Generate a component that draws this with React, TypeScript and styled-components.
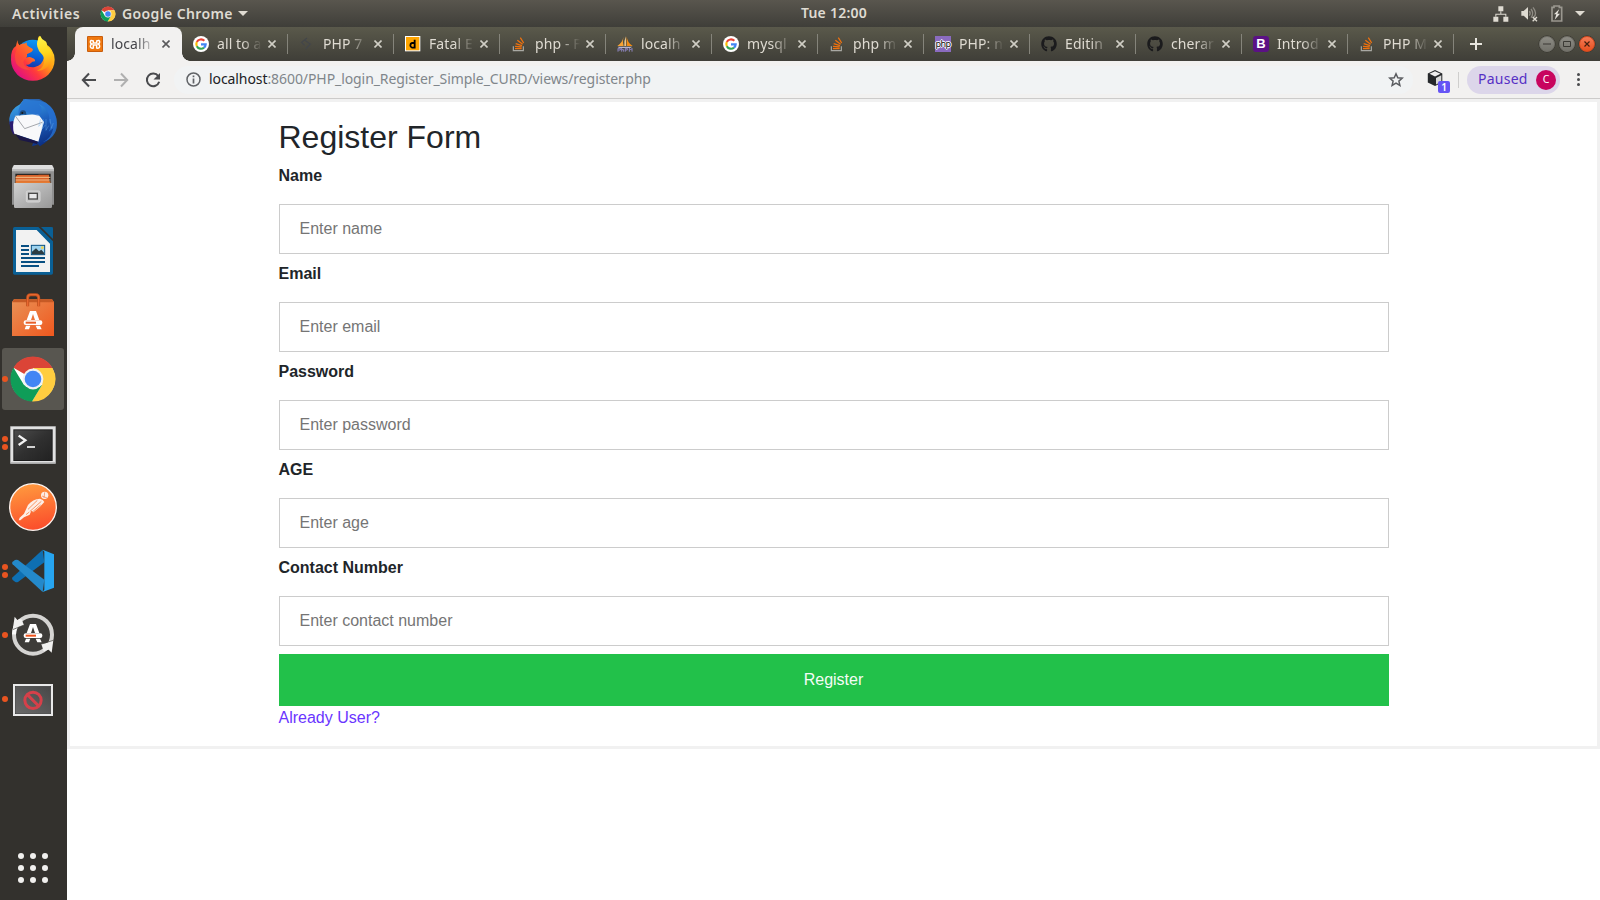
import React from "react";
import styled, { createGlobalStyle } from "styled-components";
import { FaGithub } from "react-icons/fa";

const ui = '"Noto Sans", "Open Sans", "DejaVu Sans", sans-serif';

const GlobalStyle = createGlobalStyle`
  *, *::before, *::after { box-sizing: border-box; }
  body { margin: 0; overflow: hidden; background: #fff; }
`;

const Desktop = styled.div`
  display: flex;
  flex-direction: column;
  width: 1600px;
  height: 900px;
  font-family: ${ui};
`;

/* ---------- top panel ---------- */

const TopBar = styled.header`
  display: grid;
  grid-template-columns: 1fr auto 1fr;
  align-items: center;
  height: 27px;
  flex: none;
  padding: 0 15px 0 12px;
  background: linear-gradient(#59564e, #3f3e39);
  color: #dfdbd2;
  font-size: 14px;
  font-weight: 600;
  line-height: 26px;
  white-space: nowrap;
`;

const PanelLeft = styled.div`
  display: flex;
  align-items: center;
`;

const PanelRight = styled.div`
  display: flex;
  align-items: center;
  justify-content: flex-end;
`;

const PanelText = styled.span<{ $w: number; $ls?: number }>`
  width: ${(p) => p.$w}px;
  letter-spacing: ${(p) => p.$ls ?? 0}px;
`;

const AppMenu = styled.div`
  display: flex;
  align-items: center;
  margin-left: 20px;
  gap: 6px;
`;

const Caret = styled.i`
  width: 0;
  height: 0;
  border: 5px solid transparent;
  border-top-color: #dfdbd2;
  border-bottom-width: 0;
`;

const Clock = styled.div`
  margin-left: 71px;
  padding-bottom: 2px;
  line-height: 24px;
  letter-spacing: 0.25px;
`;

/* ---------- dock ---------- */

const Workspace = styled.div`
  display: flex;
  flex: 1;
  min-height: 0;
`;

const Dock = styled.nav`
  display: flex;
  flex-direction: column;
  gap: 2px;
  width: 67px;
  flex: none;
  padding: 1px 0 0 2px;
  background: #33312d;
`;

const DockSlot = styled.div<{ $active?: boolean }>`
  position: relative;
  display: flex;
  align-items: center;
  justify-content: center;
  width: 62px;
  height: 62px;
  flex: none;
  border-radius: 3px;
  background: ${(p) => (p.$active ? "#585650" : "transparent")};
`;

const RunningDots = styled.div`
  position: absolute;
  left: 0;
  top: 0;
  bottom: 0;
  display: flex;
  flex-direction: column;
  justify-content: center;
  gap: 2px;
`;

const RunningDot = styled.i`
  width: 6px;
  height: 6px;
  border-radius: 50%;
  background: #e95420;
`;

const AppsButton = styled.div`
  display: grid;
  grid-template-columns: repeat(3, 6px);
  gap: 6px;
  margin: auto 0 17px 16px;
`;

const AppsDot = styled.i`
  height: 6px;
  border-radius: 50%;
  background: #f1f0ee;
`;

/* ---------- browser ---------- */

const Browser = styled.main`
  display: flex;
  flex-direction: column;
  flex: 1;
  min-width: 0;
  background: #fff;
`;

const TabStrip = styled.div`
  display: flex;
  height: 34px;
  flex: none;
  padding-left: 8px;
  background: linear-gradient(#5a594b, #3f3e38);
`;

const TabBox = styled.div<{ $active?: boolean }>`
  position: relative;
  display: flex;
  align-items: center;
  width: ${(p) => (p.$active ? 107 : 106)}px;
  margin-right: ${(p) => (p.$active ? -1 : 0)}px;
  flex: none;
  padding-left: 12px;
  border-radius: 8px 8px 0 0;
  background: ${(p) => (p.$active ? "#f2f1f0" : "transparent")};
  color: ${(p) => (p.$active ? "#45454a" : "#dfdbd2")};

  ${(p) =>
    p.$active
      ? `
  &::before, &::after {
    content: "";
    position: absolute;
    bottom: 0;
    width: 8px;
    height: 8px;
  }
  &::before { left: -8px; background: radial-gradient(circle at 0 0, transparent 7.5px, #f2f1f0 8px); }
  &::after { right: -8px; background: radial-gradient(circle at 100% 0, transparent 7.5px, #f2f1f0 8px); }
  `
      : ""}
`;

const TabTitle = styled.span`
  width: 46px;
  margin-left: 8px;
  white-space: nowrap;
  font-size: 14px;
  line-height: 20px;
  letter-spacing: 0.1px;
  mask-image: linear-gradient(to right, #000 25px, transparent 45px);
`;

const TabClose = styled.svg`
  width: 8px;
  height: 8px;
  margin-left: 5px;
`;

const TabDivider = styled.i`
  width: 1px;
  height: 20px;
  margin: 0 -1px 0 auto;
  background: #85847b;
`;

const NewTab = styled.svg`
  width: 12px;
  height: 12px;
  margin: 11px 0 0 17px;
`;

const WindowButtons = styled.div`
  display: flex;
  align-items: center;
  gap: 4px;
  margin: 0 5px 0 auto;
`;

const WindowButton = styled.span<{ $close?: boolean }>`
  display: flex;
  align-items: center;
  justify-content: center;
  width: 16px;
  height: 16px;
  border-radius: 50%;
  border: 1px solid ${(p) => (p.$close ? "#d34a1f" : "#6f6e67")};
  background: ${(p) => (p.$close ? "linear-gradient(#f57b56, #e6501f)" : "linear-gradient(#8c8b84, #73726b)")};
  box-shadow: 0 0 0 0.5px #34332e;
`;

const Toolbar = styled.div`
  display: flex;
  align-items: center;
  height: 38px;
  flex: none;
  padding: 0 20px 1px 14px;
  background: #f2f1f0;
  box-shadow: inset 0 -1px #cccbca;
`;

const NavIcon = styled.svg<{ $gap?: number }>`
  width: 16px;
  height: 16px;
  flex: none;
  margin-right: ${(p) => p.$gap ?? 16}px;
`;

const Omnibox = styled.div`
  display: flex;
  align-items: center;
  flex: 1;
  height: 28px;
  padding: 0 9px 0 12px;
  border-radius: 14px;
  background: #f1f3f4;
`;

const Url = styled.span`
  flex: 1;
  margin: 0 0 2px 8px;
  font-size: 14px;
  line-height: 20px;
  letter-spacing: -0.08px;
  color: #80868b;
  white-space: nowrap;

  b { font-weight: 400; color: #202124; }
`;

const Extension = styled.div`
  position: relative;
  width: 22px;
  height: 22px;
  margin-left: 14px;
`;

const ExtensionBadge = styled.span`
  position: absolute;
  left: 11px;
  top: 12px;
  width: 12px;
  height: 12px;
  border-radius: 2px;
  background: #6554f5;
  color: #fff;
  font: 600 10px/12px ${ui};
  text-align: center;
`;

const ToolbarDivider = styled.i`
  width: 1px;
  height: 16px;
  margin: 0 8px 0 9px;
  background: #cfcecd;
`;

const ProfileChip = styled.div`
  display: flex;
  align-items: center;
  justify-content: space-between;
  width: 93px;
  height: 28px;
  padding: 0 4px 0 11px;
  border-radius: 14px;
  background: #dcd6ea;
  color: #5630c5;
  font-size: 14px;
  letter-spacing: 0.25px;
`;

const ChipText = styled.span`
  margin-bottom: 2px;
  line-height: 20px;
`;

const Avatar = styled.span`
  width: 20px;
  height: 20px;
  border-radius: 50%;
  background: #c8055f;
  color: #fff;
  font-size: 10.5px;
  letter-spacing: 0;
  line-height: 19px;
  text-align: center;
`;

const MenuDots = styled.div`
  display: flex;
  flex-direction: column;
  gap: 2px;
  margin-left: 17px;
`;

const MenuDot = styled.i`
  width: 3px;
  height: 3px;
  border-radius: 50%;
  background: #4a4b4d;
`;

/* ---------- page ---------- */

const Form = styled.form`
  border: 3px solid #f1f1f1;
  font: 400 16px/24px "Liberation Sans", Arial, sans-serif;
  color: #212529;
`;

const Container = styled.div`
  width: 1140px;
  margin: 0 auto;
  padding: 16px 15px;
`;

const Heading = styled.h2`
  margin: 0 0 8px;
  font-size: 32px;
  font-weight: 500;
  line-height: 1.2;
`;

const Label = styled.label`
  display: block;
  font-weight: 700;
`;

const Input = styled.input`
  display: block;
  width: 100%;
  height: 50px;
  margin: 16px 0 8px;
  padding: 12px 20px;
  border: 1px solid #ccc;
  background: #fff;
  font: inherit;
  outline: none;

  &::placeholder { color: #757575; opacity: 1; }
`;

const Field = styled.div`
  display: flow-root;
`;

const Submit = styled.button`
  display: block;
  width: 100%;
  padding: 14px 20px;
  border: 0;
  background: #22c14a;
  color: #f4fcf6;
  font: inherit;
`;

const LoginLink = styled.a`
  display: block;
  color: #6a35ff;
`;

/* ---------- drawings ---------- */

const ChromeLogo = ({ size }: { size: number }) => (
  <svg width={size} height={size} viewBox="0 0 48 48">
    <circle cx="24" cy="24" r="22" fill="#fff" />
    <path d="M24 24 4.5 12.8A22.5 22.5 0 0 1 43.500 13H24z" fill="#db4437" />
    <path d="M43.500 13A22.5 22.5 0 0 1 23 46.500L33.500 29 24 13z" fill="#ffcd40" />
    <path d="M4.500 12.800 15 30 24 34 33 30 23 46.500A22.500 22.500 0 0 1 4.500 12.800z" fill="#0f9d58" />
    <circle cx="24" cy="24" r="10.4" fill="#f1f1f1" />
    <circle cx="24" cy="24" r="8.3" fill="#4285f4" />
  </svg>
);

const Firefox = () => (
  <svg width="48" height="48" viewBox="27 30 144 144">
    <defs>
      <linearGradient id="ffBody" x1="0.9" y1="0.1" x2="0.15" y2="0.85">
        <stop offset="0" stopColor="#ffe226" />
        <stop offset="0.4" stopColor="#ff9a14" />
        <stop offset="0.7" stopColor="#ff3a3c" />
        <stop offset="1" stopColor="#e3127e" />
      </linearGradient>
      <linearGradient id="ffTail" x1="0.4" y1="0" x2="0.5" y2="1">
        <stop offset="0" stopColor="#fff44a" />
        <stop offset="0.5" stopColor="#ffd71c" />
        <stop offset="1" stopColor="#ff8b12" />
      </linearGradient>
      <linearGradient id="ffGlobe" x1="0.6" y1="0" x2="0.4" y2="1">
        <stop offset="0" stopColor="#0a9af5" />
        <stop offset="0.55" stopColor="#0a59d2" />
        <stop offset="1" stopColor="#2b1a80" />
      </linearGradient>
    </defs>
    <circle cx="98" cy="96" r="52" fill="url(#ffGlobe)" />
    <path d="M52 46q0 9 6 15 7-6 17-5l4-4q0 8 5 12l14 8q1 8-9 11l-8 4q2 8-3 11 12-5 19 1 9 2 8 10-9 0-13 6-6 6-15 4 10 10 28 7 22-5 26-26 4-22-14-44-8-20 3-24 1 12 14 22 30 20 30 50a65 63 0 0 1-131 0q-1-32 15-41z" fill="url(#ffBody)" />
    <path d="M121 33q-13 13-9 32 3 14 15 24 9 12 4 28-5 15-20 20 24 2 38-20 14-26 0-46-3-5-8-7 1-14-7-17-10-5-13-14z" fill="url(#ffTail)" />
    <path d="M52 46q0 9 6 15 7-6 17-5l4-4q0 8 5 12l14 8q1 8-9 11l-8 4q2 8-3 11-8 8-8 14 4 17 23 22-30 2-44-18Q40 90 50 75q0-17 2-29z" fill="#ff5b2d" opacity=".55" />
  </svg>
);

const Thunderbird = () => (
  <svg width="48" height="48" viewBox="27 222 144 144">
    <defs>
      <linearGradient id="tbBird" x1="0.3" y1="0" x2="0.7" y2="1">
        <stop offset="0" stopColor="#3da5e6" />
        <stop offset="0.5" stopColor="#1e62c0" />
        <stop offset="1" stopColor="#0b2d80" />
      </linearGradient>
    </defs>
    <path d="M76 222l16 4q48-4 68 30 16 36 2 66-12 24-42 42l-6-6q-10 4-18 6l4-12-50-24q-24-18-22-48 4-28 32-42 4-10 16-16z" fill="url(#tbBird)" />
    <path d="M28 290q2 26 14 40l10-22-12-20z" fill="#2a1b70" />
    <path d="M46 272l68-5 18 24-17 59-72-24q-9-25 3-54z" fill="#f8f8fa" />
    <path d="M46 273l28 38 53-19" fill="none" stroke="#a5a7ac" strokeWidth="3" />
    <path d="M46 328l68 22-3 7-52-12z" fill="#1b1747" />
    <path d="M69 226q-17 25-13 46 4-18 34-8 18 8 28 8 14-22-2-34 34 10 32 54l6 8-8 20 14-10q-6 30-32 42 50-18 42-70-8-40-48-58-24-10-53-8z" fill="#2770cf" opacity=".8" />
    <path d="M58 272q1-16 11-16t10 13q-12-4-21 3z" fill="#1d4a7c" />
    <circle cx="67" cy="264" r="3" fill="#171717" />
    <path d="M122 282l-6 22 8-8m6-14-4 30 10-12m2-18 0 34 8-14m4-20 4 28 6-16" fill="none" stroke="#6fb1ef" strokeWidth="2" opacity=".55" />
  </svg>
);

const Files = () => (
  <svg width="48" height="48" viewBox="27 414 144 144">
    <defs>
      <linearGradient id="drawer" x1="0" y1="0" x2="1" y2="1">
        <stop offset="0" stopColor="#d0d0d0" />
        <stop offset="1" stopColor="#989898" />
      </linearGradient>
    </defs>
    <path d="M42 420h114q5 4 6 12v107H36V432q1-8 6-12z" fill="#8f8f8f" />
    <path d="M42 420h114l6 12H36z" fill="#dedede" />
    <path d="M36 432h126v7H36z" fill="#bcbcbc" />
    <path d="M46 446h106v28H46z" fill="#2b2724" />
    <path d="M52 450h60l6-1h29v24H47v-18z" fill="#d9622a" />
    <path d="M47 457h104M47 465h104" stroke="#f3c189" strokeWidth="3" />
    <path d="M47 469h104v5H47z" fill="#e57c34" />
    <path d="M42 474h114v71q0 4-4 4H46q-4 0-4-4z" fill="url(#drawer)" />
    <rect x="79" y="498" width="41" height="33" rx="4" fill="#c6c6c6" stroke="#d6d6d6" strokeWidth="3" />
    <rect x="86" y="505" width="26" height="17" fill="#e9e9ea" stroke="#4b4b4b" strokeWidth="4" />
  </svg>
);

const Writer = () => (
  <svg width="48" height="48" viewBox="27 606 144 144">
    <path d="M44 606h71l44 43v95q0 5-5 5H44q-5 0-5-5V611q0-5 5-5z" fill="#0a6096" />
    <path d="M123 606h32q4 0 4 4v32z" fill="#0a6096" />
    <path d="M48 615h62l40 41v85H48z" fill="#f2f2f2" />
    <path d="M110 609l45 46" stroke="#0a6096" strokeWidth="5" />
    <path d="M63 663h24M63 675h24M63 687h24M63 699h72M63 711h72M63 723h54" stroke="#084f82" strokeWidth="6" />
    <rect x="94" y="661" width="40" height="28" fill="#9ed3ef" stroke="#084f82" strokeWidth="3" />
    <circle cx="127" cy="668" r="4" fill="#f6d348" />
    <path d="M96 688v-8l12-10 9 9 7-5 8 9v5z" fill="#2c3c43" />
  </svg>
);

const SoftwareA = ({ y, accent }: { y: number; accent: string }) => (
  <g transform={`translate(0 ${y})`}>
    <path d="M90 0h18l10 27H105l-6-18-6 18H80z" fill="#fff" />
    <rect x="71" y="28" width="56" height="14" rx="6" fill="#fff" />
    <path d="M77 32h31v6H77z" fill={accent} />
    <path d="M74 55l4-11h13l-4 11zM107 44h13l5 11h-13z" fill="#fff" />
  </g>
);

const Software = () => (
  <svg width="48" height="48" viewBox="27 33 144 144">
    <defs>
      <linearGradient id="bag" x1="0" y1="0" x2="1" y2="1">
        <stop offset="0" stopColor="#e89156" />
        <stop offset="1" stopColor="#f0581e" />
      </linearGradient>
    </defs>
    <path d="M42 58h114l6 8v102H36V66z" fill="url(#bag)" />
    <path d="M42 58h114l6 9H36z" fill="#c65a25" />
    <path d="M83 79V53q0-9 9-9h15q9 0 9 9v26" fill="none" stroke="#c2501e" strokeWidth="9" />
    <path d="M83 79V53q0-9 9-9h15q9 0 9 9v26" fill="none" stroke="#e8682f" strokeWidth="4" />
    <SoftwareA y={93} accent="#e8602a" />
  </svg>
);

const TerminalIcon = () => (
  <svg width="48" height="48" viewBox="27 417 144 144">
    <defs>
      <linearGradient id="screen" x1="0" y1="0" x2="1" y2="1">
        <stop offset="0" stopColor="#4b4b4b" />
        <stop offset="0.5" stopColor="#303030" />
        <stop offset="1" stopColor="#222" />
      </linearGradient>
    </defs>
    <rect x="30" y="438" width="138" height="114" rx="3" fill="#a9a9a9" />
    <rect x="33" y="441" width="132" height="106" fill="#e2e2e2" />
    <rect x="40" y="448" width="118" height="95" fill="#1c1c1c" />
    <rect x="43" y="451" width="112" height="89" fill="url(#screen)" />
    <path d="M56 467l20 14-20 14" fill="none" stroke="#f3f3f3" strokeWidth="7" />
    <path d="M81 501h24" stroke="#f3f3f3" strokeWidth="5" />
  </svg>
);

const Postman = () => (
  <svg width="48" height="48" viewBox="27 609 144 144">
    <defs>
      <linearGradient id="pm" x1="0.3" y1="0" x2="0.5" y2="1">
        <stop offset="0" stopColor="#ff9a3e" />
        <stop offset="1" stopColor="#fb4d2b" />
      </linearGradient>
    </defs>
    <circle cx="99" cy="681" r="70" fill="url(#pm)" stroke="#fdf3ee" strokeWidth="4" />
    <circle cx="134" cy="646" r="11" fill="#fdeee6" />
    <path d="M126 648l15 6M134 637l-2 17" stroke="#f37a43" strokeWidth="2" />
    <path d="M120 656q10 2 13 10l-13 14-20 17-6-5-5 12-17 8-11 9h-5l3-8 13-12 12-26q14-18 36-19z" fill="#fdeee6" />
    <path d="M84 688l28-27M90 694l34-30M96 697l26-22M78 704l10-8" stroke="#f5854c" strokeWidth="2.500" />
  </svg>
);

const VsCode = () => (
  <svg width="48" height="48" viewBox="27 36 144 144">
    <path d="M128 44l5 38-79 59q-4 2-8 0l-8-6q-4-4 0-8z" fill="#0e6fb2" />
    <path d="M38 88q-4-5 0-8l7-5q5-2 9 0l79 59-5 37z" fill="#2489ca" />
    <path d="M128 44l34 14v100l-34 13 5-7V50z" fill="#27a5f0" />
  </svg>
);

const Updater = () => (
  <svg width="48" height="48" viewBox="27 228 144 144">
    <circle cx="99" cy="299" r="57" fill="#3d3c39" stroke="#d5d4d2" strokeWidth="12" />
    <path d="M42 298a57 57 0 0 1 20-42" stroke="#fafafa" strokeWidth="12" fill="none" />
    <path d="M38 284l6-39 8 10 12-3 8 18-14 5z" fill="#f0f0ef" />
    <path d="M160 316l-5 37-9-9-15 5-7-22 15-3z" fill="#f0f0ef" />
    <path d="M38 284l34-14M125 327l35-11" stroke="#403f3b" strokeWidth="2" />
    <SoftwareA y={267} accent="#ee531c" />
  </svg>
);

const ScreenLock = () => (
  <svg width="48" height="48" viewBox="27 420 144 144">
    <defs>
      <linearGradient id="dim" x1="1" y1="0" x2="0" y2="1">
        <stop offset="0" stopColor="#474747" />
        <stop offset="1" stopColor="#6a6a6a" />
      </linearGradient>
    </defs>
    <rect x="39" y="447" width="120" height="96" fill="#e9e9e9" />
    <rect x="46" y="454" width="106" height="82" fill="url(#dim)" stroke="#3a3a3a" strokeWidth="2" />
    <circle cx="99" cy="496" r="24.500" fill="none" stroke="#d5404a" strokeWidth="9" />
    <path d="M82 479l34 34" stroke="#d5404a" strokeWidth="9" />
  </svg>
);

const Fav = styled.svg.attrs({ viewBox: "0 0 48 48", width: 16, height: 16 })`
  flex: none;
`;

const Xampp = () => (
  <Fav>
    <rect width="48" height="48" rx="3" fill="#c95d0c" />
    <rect x="3" y="3" width="42" height="42" fill="#f0780f" />
    <path d="M19 21v-6q-9-4-9 3 0 4 4 6-4 2-4 7 0 7 9 5v-9h10v9q9 2 9-5 0-5-4-7 4-2 4-6 0-7-9-3v6z" fill="none" stroke="#fff" strokeWidth="4.500" />
  </Fav>
);

const Google = () => (
  <Fav>
    <circle cx="24" cy="24" r="24" fill="#fff" />
    <g fill="none" strokeWidth="6.500">
      <path d="M34 14.500A14 14 0 0 0 11.500 18" stroke="#ea4335" />
      <path d="M11.500 18A14 14 0 0 0 11.500 30.500" stroke="#fbbc05" />
      <path d="M11.500 30.500A14 14 0 0 0 33 35" stroke="#34a853" />
      <path d="M33 35A14 14 0 0 0 38 25H24" stroke="#4285f4" />
    </g>
  </Fav>
);

const DarkArrows = () => (
  <Fav>
    <path d="M24 6 8 19l9 9M16 12l18 12-14 15" fill="none" stroke="#43464a" strokeWidth="3.500" />
  </Fav>
);

const Digital = () => (
  <Fav>
    <rect x="1.500" y="1.500" width="43" height="43" fill="#ffa500" stroke="#fff" strokeWidth="3" />
    <path d="M29 11v24h-8q-5-1-5-7t5-7h8" fill="none" stroke="#000" strokeWidth="5.500" />
  </Fav>
);

const StackOverflow = () => (
  <Fav>
    <path d="M7 31v13h30V31" fill="none" stroke="#a9a9a4" strokeWidth="3.500" />
    <path d="M12 38h20M12 31l20 2M14 23l19 6M19 13l16 12M28 5l10 16" stroke="#f0720e" strokeWidth="3.800" />
  </Fav>
);

const PhpMyAdmin = () => (
  <Fav>
    <path d="M19 3q-2 16-18 27h19q-4-12-1-27z" fill="#f7a233" />
    <path d="M27 1q-7 14-5 29h5z" fill="#e9c58a" />
    <path d="M29 1q2 20 18 29H29z" fill="#f28c13" />
    <path d="M2 32h44l-6 4H6z" fill="#b8b5cc" />
    <path d="M3 47V37h7v5H4m10-6v11m0-6h6v6m5 0V37h6v5h-5m11 5V37l4 5 4-5v10" fill="none" stroke="#8b83bd" strokeWidth="3" />
  </Fav>
);

const PhpMark = styled.span`
  display: flex;
  align-items: center;
  justify-content: center;
  width: 16px;
  height: 16px;
  flex: none;
  background: #8a6bbf;
  color: #111;
  font: 400 9px/14px ${ui};
  letter-spacing: -0.5px;
  text-shadow: 0 0 1px #fff, 1px 0 0 #fff, -1px 0 0 #fff, 0 1px 0 #fff, 0 -1px 0 #fff;
`;

const BootstrapMark = styled.span`
  width: 16px;
  height: 16px;
  flex: none;
  border-radius: 3px;
  background: #5b1185;
  color: #fff;
  font: 700 13px/16px "Liberation Sans", Arial, sans-serif;
  text-align: center;
`;

const GithubMark = styled(FaGithub)`
  width: 16px;
  height: 16px;
  flex: none;
  color: #1b1b1d;
`;

const tabs: { title: string; icon: React.ReactNode }[] = [
  { title: "localh", icon: <Xampp /> },
  { title: "all to a", icon: <Google /> },
  { title: "PHP 7", icon: <DarkArrows /> },
  { title: "Fatal E", icon: <Digital /> },
  { title: "php - F", icon: <StackOverflow /> },
  { title: "localh", icon: <PhpMyAdmin /> },
  { title: "mysql", icon: <Google /> },
  { title: "php m", icon: <StackOverflow /> },
  { title: "PHP: n", icon: <PhpMark>php</PhpMark> },
  { title: "Editin", icon: <GithubMark /> },
  { title: "cherar", icon: <GithubMark /> },
  { title: "Introd", icon: <BootstrapMark>B</BootstrapMark> },
  { title: "PHP M", icon: <StackOverflow /> },
];

const dockApps: { icon: React.ReactNode; running: number }[] = [
  { icon: <Firefox />, running: 0 },
  { icon: <Thunderbird />, running: 0 },
  { icon: <Files />, running: 0 },
  { icon: <Writer />, running: 0 },
  { icon: <Software />, running: 0 },
  { icon: <ChromeLogo size={48} />, running: 1 },
  { icon: <TerminalIcon />, running: 2 },
  { icon: <Postman />, running: 0 },
  { icon: <VsCode />, running: 2 },
  { icon: <Updater />, running: 1 },
  { icon: <ScreenLock />, running: 1 },
];

const fields = [
  { label: "Name", placeholder: "Enter name" },
  { label: "Email", placeholder: "Enter email" },
  { label: "Password", placeholder: "Enter password" },
  { label: "AGE", placeholder: "Enter age" },
  { label: "Contact Number", placeholder: "Enter contact number" },
];

const StatusIcons = () => (
  <svg width="72" height="18" viewBox="0 0 216 54">
    <g fill="#dfdbd2">
      <path d="M16 4h15v15H16zM1 35h15v15H1zM31 35h15v15H31z" />
      <path d="M22 19h3v7h15v9h-3v-6H10v6H7v-9h15z" />
      <path d="M85 18h7l13-12v38L92 32h-7z" />
    </g>
    <path d="M109 18q5 7 0 14M114 12q10 13 0 26M120 7q14 18 2 30" fill="none" stroke="#8f8c84" strokeWidth="4" />
    <path d="M119 36l13 13m0-13-13 13" stroke="#dfdbd2" strokeWidth="4" />
    <path d="M177 7h6V3h16v4h7v41h-29z" fill="none" stroke="#9a978f" strokeWidth="5" />
    <path d="M199 12l-16 16h7l-5 16 16-18h-8z" fill="#e6e3dc" />
  </svg>
);

export default function App() {
  return (
    <Desktop>
      <GlobalStyle />
      <TopBar>
        <PanelLeft>
          <PanelText $w={68} $ls={0.57}>Activities</PanelText>
          <AppMenu>
            <ChromeLogo size={16} />
            <PanelText $w={110} $ls={0.38}>Google Chrome</PanelText>
            <Caret />
          </AppMenu>
        </PanelLeft>
        <Clock>Tue 12:00</Clock>
        <PanelRight>
          <StatusIcons />
          <Caret style={{ marginLeft: 10 }} />
        </PanelRight>
      </TopBar>
      <Workspace>
        <Dock>
          {dockApps.map((app, i) => (
            <DockSlot key={i} $active={i === 5}>
              {app.icon}
              {app.running > 0 && (
                <RunningDots>
                  {Array.from({ length: app.running }, (_, n) => (
                    <RunningDot key={n} />
                  ))}
                </RunningDots>
              )}
            </DockSlot>
          ))}
          <AppsButton>
            {Array.from({ length: 9 }, (_, n) => (
              <AppsDot key={n} />
            ))}
          </AppsButton>
        </Dock>
        <Browser>
          <TabStrip>
            {tabs.map((tab, i) => (
              <TabBox key={i} $active={i === 0}>
                {tab.icon}
                <TabTitle>{tab.title}</TabTitle>
                <TabClose viewBox="0 0 8 8">
                  <path d="M.5.5l7 7m0-7-7 7" stroke={i === 0 ? "#5a5a5c" : "#d0cec5"} strokeWidth="1.6" />
                </TabClose>
                {i > 0 && <TabDivider />}
              </TabBox>
            ))}
            <NewTab viewBox="0 0 12 12">
              <path d="M6 0v12M0 6h12" stroke="#e8e6df" strokeWidth="2" />
            </NewTab>
            <WindowButtons>
              <WindowButton>
                <svg width="8" height="8" viewBox="0 0 8 8"><path d="M0 4h8" stroke="#3a3934" /></svg>
              </WindowButton>
              <WindowButton>
                <svg width="8" height="8" viewBox="0 0 8 8"><path d="M.5 1.500h7v5h-7z" fill="none" stroke="#3a3934" /></svg>
              </WindowButton>
              <WindowButton $close>
                <svg width="6" height="6" viewBox="0 0 6 6"><path d="M.5.5l5 5m0-5-5 5" stroke="#45200f" strokeWidth="1.2" /></svg>
              </WindowButton>
            </WindowButtons>
          </TabStrip>
          <Toolbar>
            <NavIcon viewBox="0 0 16 16">
              <path d="M15 8H2M8 1.500 1.800 8 8 14.500" fill="none" stroke="#4a4b4e" strokeWidth="2" />
            </NavIcon>
            <NavIcon viewBox="0 0 16 16">
              <path d="M1 8h13M8 1.500 14.200 8 8 14.500" fill="none" stroke="#b0b0b0" strokeWidth="2" />
            </NavIcon>
            <NavIcon viewBox="0 0 16 16" $gap={13}>
              <path d="M13.300 4.200A6.300 6.300 0 1 0 14.200 9.800" fill="none" stroke="#4a4b4e" strokeWidth="2" />
              <path d="M15 1v6.500H8.500z" fill="#4a4b4e" />
            </NavIcon>
            <Omnibox>
              <svg width="15" height="15" viewBox="0 0 15 15">
                <circle cx="7.500" cy="7.500" r="6.500" fill="none" stroke="#606367" strokeWidth="1.500" />
                <path d="M7.500 6.500v5M7.500 3.500v1.700" stroke="#606367" strokeWidth="1.700" />
              </svg>
              <Url><b>localhost</b>:8600/PHP_login_Register_Simple_CURD/views/register.php</Url>
              <svg width="16" height="16" viewBox="0 0 16 16">
                <path d="M8 1.800l1.800 4 4.400.4-3.300 2.900 1 4.300L8 11.100l-3.900 2.300 1-4.300-3.300-2.900 4.400-.4z" fill="none" stroke="#5a5c60" strokeWidth="1.500" />
              </svg>
            </Omnibox>
            <Extension>
              <svg width="17" height="18" viewBox="0 0 17 18">
                <path d="M8 1l7.300 3.600v8.800L8 17 .8 13.400V4.600z" fill="#26282b" />
                <path d="M8 2.200l5.500 2.600L8 7.600 2.500 4.800z" fill="#efeeee" />
                <path d="M9 9l5.300-2.700v6.500L9 15.400z" fill="#d9d9d9" />
              </svg>
              <ExtensionBadge>1</ExtensionBadge>
            </Extension>
            <ToolbarDivider />
            <ProfileChip>
              <ChipText>Paused</ChipText>
              <Avatar>C</Avatar>
            </ProfileChip>
            <MenuDots>
              <MenuDot />
              <MenuDot />
              <MenuDot />
            </MenuDots>
          </Toolbar>
          <Form>
            <Container>
              <Heading>Register Form</Heading>
              {fields.map((f) => (
                <Field key={f.label}>
                  <Label>{f.label}</Label>
                  <Input placeholder={f.placeholder} />
                </Field>
              ))}
              <Submit type="button">Register</Submit>
              <LoginLink>Already User?</LoginLink>
            </Container>
          </Form>
        </Browser>
      </Workspace>
    </Desktop>
  );
}
